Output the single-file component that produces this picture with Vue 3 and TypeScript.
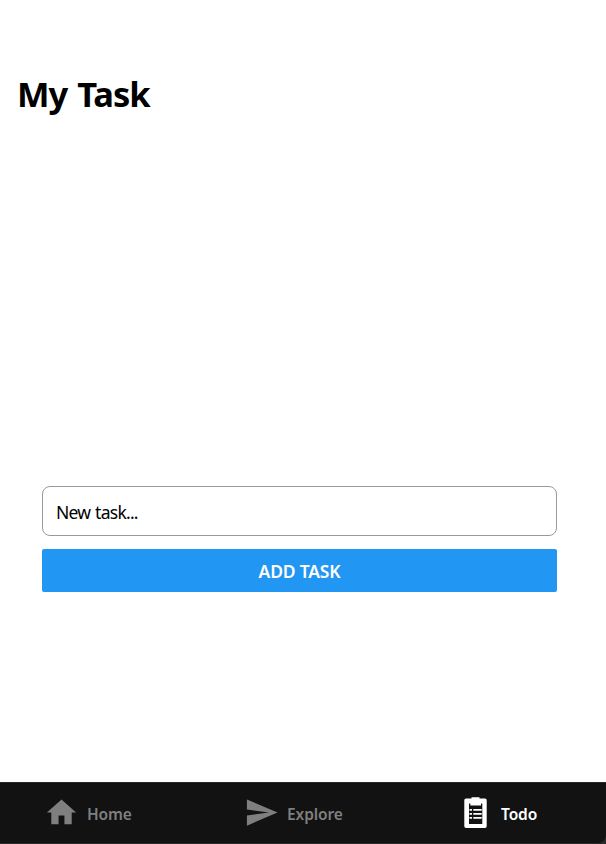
<script setup lang="ts">
import { ref } from 'vue'

type TabName = 'Home' | 'Explore' | 'Todo'
const tabs: TabName[] = ['Home', 'Explore', 'Todo']
const active = ref<TabName>('Todo')
const draft = ref('')
</script>

<template>
  <div class="screen">
    <main class="content">
      <h1 class="title">My Task</h1>
      <form class="task-form" @submit.prevent="draft = ''">
        <input v-model="draft" class="task-input" type="text" placeholder="New task..." />
        <button class="add" type="submit"><span>ADD TASK</span></button>
      </form>
    </main>
    <nav class="tabbar">
      <div class="tabs">
        <a
          v-for="tab in tabs"
          :key="tab"
          class="tab"
          :class="[tab.toLowerCase(), { active: tab === active }]"
          @click="active = tab"
        >
          <svg v-if="tab === 'Home'" class="icon" viewBox="0 0 24 24">
            <path d="M10 20v-6h4v6h5v-8h3L12 3 2 12h3v8z" />
          </svg>
          <svg v-else-if="tab === 'Explore'" class="icon" viewBox="0 0 24 24">
            <path d="M2.01 21L23 12 2.01 3 2 10l15 2-15 2z" />
          </svg>
          <svg v-else class="icon" viewBox="0 0 35 35">
            <path
              fill-rule="evenodd"
              d="M7 3.500h5.500V2.300h8v1.200H26a1.700 1.700 0 0 1 1.700 1.700V31.300a1.700 1.700 0 0 1-1.700 1.700H7a1.700 1.700 0 0 1-1.700-1.700V5.200A1.700 1.700 0 0 1 7 3.500zM10 8.500V29h13.300V8.500H22v2H11.300v-2z"
            />
            <path d="M10.500 14H13v1.700h-2.500zm3.800 0h8.400v1.700h-8.400zM10.500 18H13v1.700h-2.500zm3.800 0h8.400v1.700h-8.400zM10.500 22H13v1.700h-2.500zm3.800 0h8.400v1.700h-8.400z" />
          </svg>
          <span class="label">{{ tab }}</span>
        </a>
      </div>
    </nav>
  </div>
</template>

<style>
body {
  background: #fff;
}
</style>

<style scoped>
.screen {
  display: flex;
  flex-direction: column;
  height: 844px;
  overflow: hidden;
  font-family: 'Segoe UI', 'Noto Sans', 'Open Sans', sans-serif;
  background: #fff;
}
.content {
  flex: 1;
  padding-top: 69px;
}
.title {
  margin: 0 0 367px 17px;
  height: 50px;
  line-height: 50px;
  font-size: 34.5px;
  font-weight: 700;
  letter-spacing: -1px;
  word-spacing: 2px;
  color: #000;
}
.task-form {
  display: flex;
  flex-direction: column;
  gap: 13px;
  width: 515px;
  margin-left: 42px;
}
.task-input {
  box-sizing: border-box;
  height: 50px;
  padding: 2px 13px 0;
  border: 1px solid #999;
  border-radius: 8px;
  outline: none;
  background: #fff;
  font-family: inherit;
  font-size: 17.5px;
  letter-spacing: -0.75px;
  word-spacing: 1px;
  color: #000;
}
.task-input::placeholder {
  color: #000;
  opacity: 1;
}
.add {
  height: 43px;
  padding: 0;
  border: 0;
  border-radius: 2px;
  background: #2196f3;
  color: #fff;
  font-family: inherit;
  font-size: 17.5px;
  font-weight: 600;
  letter-spacing: -0.2px;
}
.tabbar {
  box-sizing: border-box;
  height: 62px;
  background: #29292a;
}
.tabs {
  box-sizing: border-box;
  display: grid;
  grid-template-columns: 200px 215px 1fr;
  height: 61px;
  padding-left: 44px;
  border-top: 1px solid #272729;
  border-bottom-right-radius: 8px;
  background: #121212;
}
.tab {
  display: flex;
  align-items: flex-start;
  padding-top: 12px;
  color: #7f7f7f;
  cursor: pointer;
}
.tab.active {
  color: #fff;
}
.icon {
  flex: none;
  width: 35px;
  height: 35px;
  margin-right: 8px;
  fill: currentColor;
}
.todo .icon {
  margin-right: 7px;
}
.label {
  padding-top: 8px;
  font-size: 15.5px;
  line-height: 22px;
  font-weight: 600;
  letter-spacing: -0.1px;
}
</style>
